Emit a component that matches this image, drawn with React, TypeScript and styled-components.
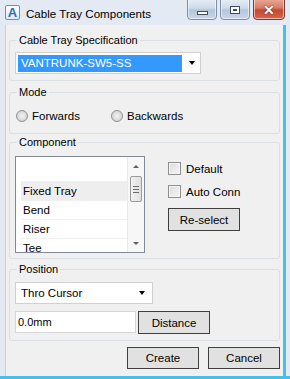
import React from "react";
import styled, { createGlobalStyle } from "styled-components";

const GlobalStyle = createGlobalStyle`
  html, body { margin: 0; padding: 0; background: #ffffff; }
  body { font-family: "Liberation Sans", Arial, sans-serif; font-size: 11px; color: #000; }
  * { box-sizing: border-box; }
`;

const Window = styled.div`
  width: 290px;
  height: 379px;
  background: #e3eaf3;
  border-bottom: 3px solid #44c1e8;
  display: flex;
  flex-direction: column;
  overflow: hidden;
`;

const TitleBar = styled.div`
  height: 25px;
  flex: none;
  display: flex;
  align-items: flex-start;
  padding-left: 5px;
`;

const AppIcon = styled.div`
  width: 15px;
  height: 15px;
  margin-top: 5px;
  border: 1px solid #6f8fb4;
  border-radius: 2px;
  background: linear-gradient(#ffffff, #dfe9f5);
  color: #2c6db4;
  font-weight: bold;
  font-size: 13px;
  line-height: 13px;
  text-align: center;
`;

const TitleText = styled.div`
  margin-left: 6px;
  margin-top: 6px;
  font-size: 11.6px;
  line-height: 16px;
  color: #000;
`;

const Caption = styled.div`
  margin-left: auto;
  margin-right: 5px;
  display: flex;
  gap: 3px;
  margin-top: -2px;
`;

const CapBtn = styled.div<{ $w: number; $close?: boolean }>`
  width: ${(p) => p.$w}px;
  height: 22px;
  border: 1px solid ${(p) => (p.$close ? "#7a3a30" : "#7d8ea6")};
  border-radius: 0 0 4px 4px;
  background: ${(p) =>
    p.$close
      ? "linear-gradient(#e9a898 0%, #d97a66 45%, #c7472f 55%, #d2664f 100%)"
      : "linear-gradient(#e6edf6 0%, #cfdbea 45%, #b4c6dc 55%, #c9d7e8 100%)"};
  box-shadow: inset 0 0 0 1px rgba(255, 255, 255, 0.55);
  display: flex;
  align-items: center;
  justify-content: center;
  padding-top: 2px;
`;

const MinGlyph = styled.div`
  width: 11px;
  height: 4px;
  margin-top: 5px;
  background: #ffffff;
  border: 1px solid #3d4c60;
`;

const MaxGlyph = styled.div`
  width: 10px;
  height: 8px;
  border: 1px solid #3d4c60;
  background: #fff;
  box-shadow: inset 0 0 0 2px #fff, inset 0 0 0 3px #3d4c60;
`;

const CloseGlyph = styled.div`
  color: #ffffff;
  font-weight: bold;
  font-size: 14px;
  line-height: 14px;
  text-shadow: 0 0 1px #5a1d14, 0 0 1px #5a1d14;
`;

const Client = styled.div`
  flex: 1;
  margin: 0 4px 0 5px;
  background: #f0f0f0;
  border-left: 1px solid #c8d2de;
  border-right: 3px solid #44c1e8;
  padding: 15px 3px 0 3px;
  display: flex;
  flex-direction: column;
`;

const Group = styled.div<{ $mt: number; $h: number }>`
  position: relative;
  margin-top: ${(p) => p.$mt}px;
  height: ${(p) => p.$h}px;
  border: 1px solid #d9dfe4;
  border-radius: 3px;
  padding: 0 0 0 5px;
  flex: none;
`;

const GroupLabel = styled.span`
  position: absolute;
  top: -8px;
  left: 7px;
  padding: 0 2px;
  background: #f0f0f0;
  line-height: 14px;
  font-size: 11px;
`;

const Combo = styled.div<{ $w: number; $mt: number }>`
  width: ${(p) => p.$w}px;
  height: 22px;
  margin-top: ${(p) => p.$mt}px;
  background: #ffffff;
  border: 1px solid #d0d0d0;
  display: flex;
  align-items: center;
  padding: 0 0 0 2px;
`;

const ComboValue = styled.div<{ $selected?: boolean }>`
  flex: ${(p) => (p.$selected ? "none" : "1")};
  width: ${(p) => (p.$selected ? "164px" : "auto")};
  height: 17px;
  line-height: 17px;
  padding-left: ${(p) => (p.$selected ? "3px" : "3px")};
  background: ${(p) => (p.$selected ? "#3399ff" : "transparent")};
  color: ${(p) => (p.$selected ? "#ffffff" : "#000000")};
  font-size: 11.5px;
`;

const Arrow = styled.div<{ $ml: number }>`
  margin-left: ${(p) => p.$ml}px;
  width: 0;
  height: 0;
  border-left: 3.5px solid transparent;
  border-right: 3.5px solid transparent;
  border-top: 4px solid #000;
`;

const RadioRow = styled.div`
  display: flex;
  align-items: center;
  margin-top: 17px;
  padding-left: 1px;
`;

const RadioOption = styled.label<{ $w?: number }>`
  display: flex;
  align-items: center;
  width: ${(p) => (p.$w ? `${p.$w}px` : "auto")};
  font-size: 11.5px;
`;

const RadioDot = styled.span`
  width: 12px;
  height: 12px;
  border-radius: 50%;
  border: 1px solid #8e8f8f;
  background: radial-gradient(circle at 50% 50%, #f4f4f4 0%, #dcdcdc 55%, #cfcfcf 100%);
  margin-right: 4px;
  flex: none;
`;

const ComponentRow = styled.div`
  display: flex;
  margin-top: 13px;
`;

const ListBox = styled.div`
  width: 130px;
  height: 97px;
  border: 1px solid #7f8a96;
  background: #ffffff;
  display: flex;
  overflow: hidden;
`;

const ListItems = styled.div`
  flex: 1;
  padding-left: 5px;
  display: flex;
  flex-direction: column;
`;

const ListItem = styled.div<{ $h: number; $active?: boolean }>`
  height: ${(p) => p.$h}px;
  flex: none;
  line-height: ${(p) => p.$h}px;
  padding-left: 2px;
  border-bottom: 1px solid #eef0f2;
  background: ${(p) => (p.$active ? "#eeeeee" : "#ffffff")};
  font-size: 11.5px;
`;

const ScrollBar = styled.div`
  width: 17px;
  flex: none;
  background: #f7f7f7;
  border-left: 1px solid #eaeaea;
  display: flex;
  flex-direction: column;
  align-items: center;
`;

const ScrollArrow = styled.div<{ $up?: boolean; $h: number }>`
  height: ${(p) => p.$h}px;
  display: flex;
  align-items: center;
  justify-content: center;
  &::after {
    content: "";
    width: 0;
    height: 0;
    border-left: 3px solid transparent;
    border-right: 3px solid transparent;
    ${(p) => (p.$up ? "border-bottom: 3px solid #606060;" : "border-top: 3px solid #606060;")}
  }
`;

const Thumb = styled.div`
  width: 12px;
  height: 26px;
  border: 1px solid #9a9a9a;
  border-radius: 2px;
  background: linear-gradient(90deg, #f2f2f2, #e0e0e0);
  display: flex;
  flex-direction: column;
  align-items: center;
  justify-content: center;
  gap: 2px;
`;

const Grip = styled.span`
  width: 6px;
  height: 1px;
  background: #6a6a6a;
`;

const ScrollSpacer = styled.div`
  flex: 1;
`;

const SideColumn = styled.div`
  margin-left: 23px;
  margin-top: 6px;
  display: flex;
  flex-direction: column;
`;

const CheckRow = styled.label`
  display: flex;
  align-items: center;
  height: 13px;
  margin-bottom: 10px;
  font-size: 11.5px;
`;

const CheckBox = styled.span`
  width: 13px;
  height: 13px;
  border: 1px solid #8f8f8f;
  background: linear-gradient(135deg, #dcdcdc, #f6f6f6);
  box-shadow: inset 0 0 0 1px #f4f4f4;
  margin-right: 5px;
  flex: none;
`;

const Button = styled.div<{ $w?: number; $h?: number }>`
  width: ${(p) => p.$w ?? 72}px;
  height: ${(p) => p.$h ?? 22}px;
  background: #e1e1e1;
  border: 1px solid #3f3f3f;
  display: flex;
  align-items: center;
  justify-content: center;
  font-size: 11.5px;
  flex: none;
`;

const InputRow = styled.div`
  display: flex;
  align-items: flex-start;
  gap: 2px;
  margin-top: 7px;
`;

const TextField = styled.div`
  width: 121px;
  height: 22px;
  border: 1px solid #d6d6d6;
  background: #ffffff;
  line-height: 20px;
  padding-left: 2px;
  font-size: 11px;
`;

const Footer = styled.div`
  display: flex;
  justify-content: flex-end;
  gap: 9px;
  margin-top: 6px;
`;

const items = ["Fixed Tray", "Bend", "Riser", "Tee"];

export default function App() {
  return (
    <>
      <GlobalStyle />
      <Window>
        <TitleBar>
          <AppIcon>A</AppIcon>
          <TitleText>Cable Tray Components</TitleText>
          <Caption>
            <CapBtn $w={30}>
              <MinGlyph />
            </CapBtn>
            <CapBtn $w={30}>
              <MaxGlyph />
            </CapBtn>
            <CapBtn $w={32} $close>
              <CloseGlyph>✕</CloseGlyph>
            </CapBtn>
          </Caption>
        </TitleBar>
        <Client>
          <Group $mt={0} $h={41}>
            <GroupLabel>Cable Tray Specification</GroupLabel>
            <Combo $w={186} $mt={11}>
              <ComboValue $selected>VANTRUNK-SW5-SS</ComboValue>
              <Arrow $ml={7} />
            </Combo>
          </Group>

          <Group $mt={11} $h={42}>
            <GroupLabel>Mode</GroupLabel>
            <RadioRow>
              <RadioOption $w={95}>
                <RadioDot />
                Forwards
              </RadioOption>
              <RadioOption>
                <RadioDot />
                Backwards
              </RadioOption>
            </RadioRow>
          </Group>

          <Group $mt={8} $h={117}>
            <GroupLabel>Component</GroupLabel>
            <ComponentRow>
              <ListBox>
                <ListItems>
                  <ListItem $h={25} />
                  {items.map((it, i) => (
                    <ListItem key={it} $h={19} $active={i === 0}>
                      {it}
                    </ListItem>
                  ))}
                </ListItems>
                <ScrollBar>
                  <ScrollArrow $up $h={19} />
                  <Thumb>
                    <Grip />
                    <Grip />
                    <Grip />
                  </Thumb>
                  <ScrollSpacer />
                  <ScrollArrow $h={17} />
                </ScrollBar>
              </ListBox>
              <SideColumn>
                <CheckRow>
                  <CheckBox />
                  Default
                </CheckRow>
                <CheckRow>
                  <CheckBox />
                  Auto Conn
                </CheckRow>
                <Button $w={72} $h={23}>Re-select</Button>
              </SideColumn>
            </ComponentRow>
          </Group>

          <Group $mt={10} $h={72}>
            <GroupLabel>Position</GroupLabel>
            <Combo $w={138} $mt={12}>
              <ComboValue>Thro Cursor</ComboValue>
              <Arrow $ml={0} style={{ marginRight: 7 }} />
            </Combo>
            <InputRow>
              <TextField>0.0mm</TextField>
              <Button $w={72} $h={23}>Distance</Button>
            </InputRow>
          </Group>

          <Footer>
            <Button>Create</Button>
            <Button>Cancel</Button>
          </Footer>
        </Client>
      </Window>
    </>
  );
}
